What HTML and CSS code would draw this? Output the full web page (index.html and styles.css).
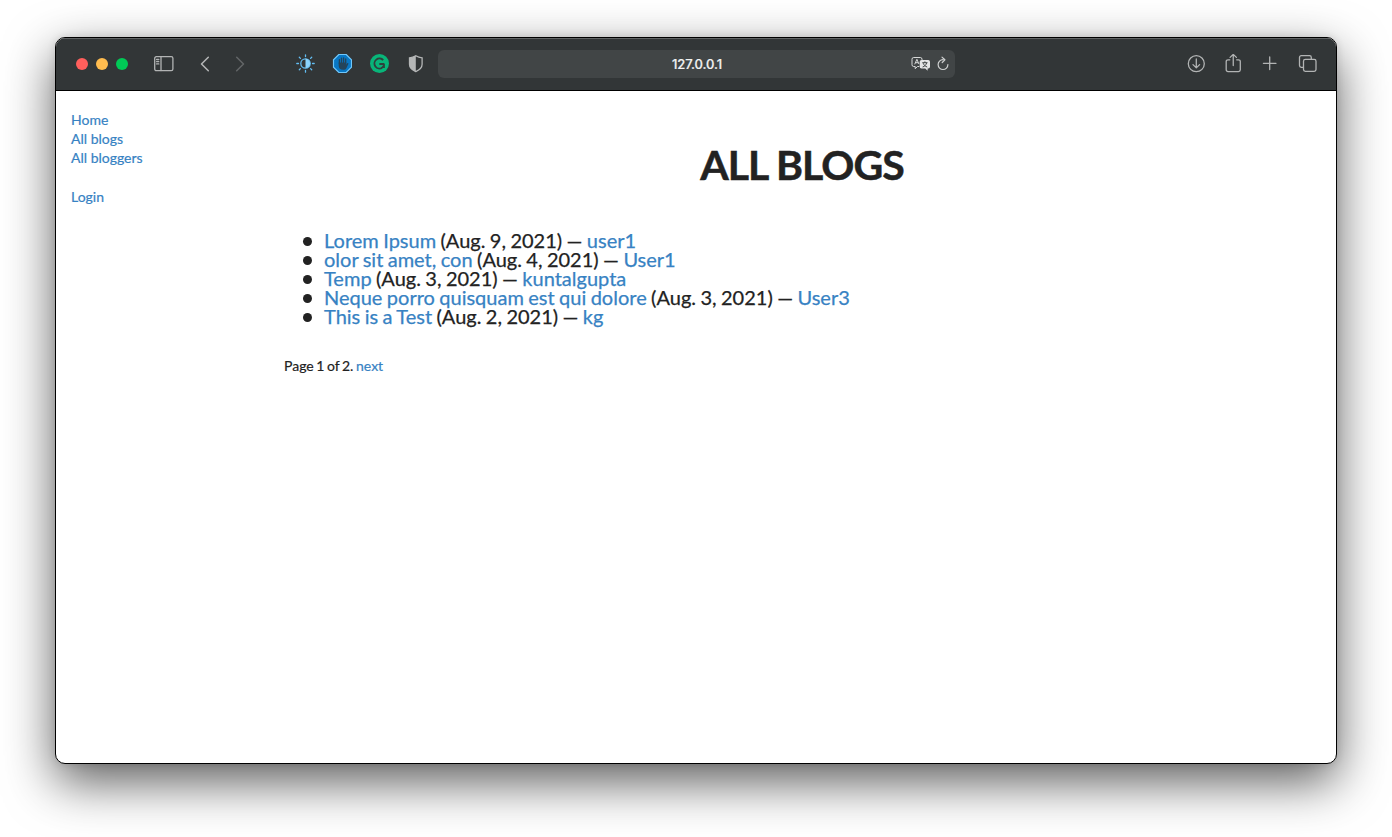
FILE: index.html
```html
<!DOCTYPE html>
<html lang="en">
<head>
<meta charset="utf-8">
<title>All blogs</title>
<link rel="stylesheet" href="styles.css">
</head>
<body>
<div class="window">
  <header class="toolbar">
    <div class="lights"><span class="light red"></span><span class="light yellow"></span><span class="light green"></span></div>
    <svg class="icon sidebar-icon" width="20" height="16" viewBox="0 0 20 16"><rect x=".7" y=".7" width="18.2" height="14" rx="1.6"/><path d="M7 1v13.5M2.6 3.5h2.2M2.6 5.7h2.2M2.6 7.9h2.2"/></svg>
    <svg class="icon back" width="10" height="16" viewBox="0 0 10 16"><path d="M8.3 1.3 1.5 8l6.8 6.7"/></svg>
    <svg class="icon forward" width="10" height="16" viewBox="0 0 10 16"><path d="M1.7 1.3 8.5 8l-6.8 6.7"/></svg>
    <div class="extensions">
      <svg width="20" height="20" viewBox="0 0 20 20"><g fill="none" stroke="#62bdf2" stroke-width="1.3" stroke-linecap="round"><circle cx="10.500" cy="9.500" r="4.700"/><path d="M10.500.8v1.700M10.500 16.500v1.700M1.800 9.500h1.700M17.500 9.500h1.700M4.300 3.300l1.100 1.100M15.600 14.600l1.100 1.100M4.300 15.700l1.100-1.100M15.600 4.400l1.100-1.100"/></g><path fill="#8bd3fc" d="M10.500 4.800a4.700 4.700 0 0 1 0 9.400z"/></svg>
      <svg width="20" height="20" viewBox="0 0 20 20"><g transform="translate(.5 -.5)"><path d="M6.300 1h7.400L19 6.300v7.400L13.700 19H6.300L1 13.700V6.300z" fill="#0877c4" stroke="#70c7fa" stroke-width="1.200"/><path fill="none" stroke="#24445a" stroke-width="1.300" stroke-linecap="round" d="M6.900 10V6.200M9 9V4.700M11.100 9V4.300M13.200 9.500V5.500"/><path fill="#24445a" d="M6.200 9h7.600v2.300l.9-1.500c.7-.8 1.500-.2 1.100.6l-1.800 4c-.6 1.300-1.500 1.900-3.300 1.900-3 0-4.500-1.500-4.500-4z"/></g></svg>
      <svg width="20" height="20" viewBox="0 0 20 20"><g transform="translate(.5 -.5)"><circle cx="10" cy="10" r="9.500" fill="#08b579"/><path d="M13.700 6.700A5 5 0 1 0 12.700 14.200M9.800 10.500h4.700" fill="none" stroke="#30403c" stroke-width="1.900"/><path d="M15.400 9.600v4.900h-4.200z" fill="#30403c"/></g></svg>
      <svg width="20" height="20" viewBox="0 0 20 20"><path d="M9.800 1.800c2 1.300 4 1.900 6.300 2v6.500c0 3.500-2.800 5.800-6.300 7.300-3.500-1.500-6.300-3.800-6.300-7.300V3.800c2.300-.1 4.300-.7 6.300-2z" fill="none" stroke="#b5b7b7" stroke-width="1.300"/><path d="M9.800 1.800v15.800c-3.500-1.500-6.300-3.800-6.300-7.300V3.800c2.300-.1 4.300-.7 6.300-2z" fill="#b5b7b7"/></svg>
    </div>
    <div class="address">
      <span class="host">127.0.0.1</span>
      <svg class="translate" width="20" height="16" viewBox="0 0 20 16"><path d="M8.200 10.500H6.500L4.200 12.700V10.500H2.700A1.700 1.700 0 0 1 1 8.800V3.200a1.700 1.700 0 0 1 1.700-1.700h6.600A1.700 1.700 0 0 1 11 3.200v.8" fill="none" stroke="#d8dada"/><path d="m3.700 8.300 2.200-5 2 4.700M4.500 6.700h2.700" fill="none" stroke="#d8dada"/><path fill="#e5e6e6" d="M10.500 4h6.700A1.800 1.800 0 0 1 19 5.800v5a1.800 1.800 0 0 1-1.800 1.800h-.6v2.200l-2.300-2.200h-3.800a1.800 1.800 0 0 1-1.800-1.800v-5A1.800 1.800 0 0 1 10.500 4z"/><path d="M11.300 6.700h5.200M13.900 5.400v1.300M15.600 7c-.6 2-2 3.400-4 4M12.200 7.200c.7 1.900 2 3.100 4 3.800" fill="none" stroke="#414546"/></svg>
      <svg class="reload" width="14" height="16" viewBox="0 0 14 16"><path d="M7 3.700a4.900 4.900 0 1 0 4.900 4.900M6 1.100l2.900 2.700L6.200 6.500"/></svg>
    </div>
    <div class="actions">
      <svg class="icon" width="20" height="20" viewBox="0 0 20 20"><circle cx="10.300" cy="9.700" r="8"/><path d="M10.300 5v8.700M7 10.600l3.300 3.300 3.300-3.300"/></svg>
      <svg class="icon" width="20" height="20" viewBox="0 0 20 20"><path d="M6.800 5.800H5A1.800 1.800 0 0 0 3.200 7.600v8.200A1.800 1.800 0 0 0 5 17.600h10.500a1.800 1.800 0 0 0 1.800-1.800V7.600a1.800 1.800 0 0 0-1.800-1.800h-1.800M10.250 11.500V.4M7.100 3.400 10.250.4l3.150 3"/></svg>
      <svg class="icon" width="20" height="20" viewBox="0 0 20 20"><path d="M9.700 3v12.600M3.400 9.300H16"/></svg>
      <svg class="icon" width="20" height="20" viewBox="0 0 20 20"><path d="M6 13.300H4.300A1.800 1.800 0 0 1 2.500 11.500V3.500a1.800 1.800 0 0 1 1.800-1.800h8.200a1.800 1.800 0 0 1 1.800 1.800v1.900"/><rect x="6.500" y="5.400" width="12.500" height="12" rx="1.800"/></svg>
    </div>
  </header>
  <div class="page">
    <nav class="side">
      <a>Home</a>
      <a>All blogs</a>
      <a>All bloggers</a>
      <a class="login">Login</a>
    </nav>
    <main class="content">
      <h1>ALL BLOGS</h1>
      <ul class="blogs">
        <li><a>Lorem Ipsum</a> (Aug. 9, 2021) — <a>user1</a></li>
        <li><a>olor sit amet, con</a> (Aug. 4, 2021) — <a>User1</a></li>
        <li><a>Temp</a> (Aug. 3, 2021) — <a>kuntalgupta</a></li>
        <li><a>Neque porro quisquam est qui dolore</a> (Aug. 3, 2021) — <a>User3</a></li>
        <li><a>This is a Test</a> (Aug. 2, 2021) — <a>kg</a></li>
      </ul>
      <p class="pagination">Page 1 of 2. <a>next</a></p>
    </main>
  </div>
</div>
</body>
</html>
```
FILE: styles.css
```css
* { box-sizing: border-box; }
body { margin: 0; padding: 37px 55px 73px; height: 837px; overflow: hidden; background: #fff; font: 14px/19px Lato, sans-serif; color: #222; }
.window { width: 1282px; height: 727px; border: 1px solid #000; border-radius: 10px; overflow: hidden; background: #fff; box-shadow: 0 18px 50px rgba(0,0,0,.64), 0 0 8px rgba(0,0,0,.12); }
.toolbar { display: flex; align-items: center; height: 53px; padding: 0 19px 0 20px; background: #323637; border-bottom: 1px solid #000; box-shadow: inset 0 1px #606364; }
.toolbar svg { display: block; flex: none; }
.lights { display: flex; gap: 8px; margin-right: 26px; }
.light { width: 12px; height: 12px; border-radius: 50%; }
.red { background: #ff5f5c; }
.yellow { background: #ffbc4f; }
.green { background: #00ca56; }
.icon { fill: none; stroke: #b2b4b4; stroke-width: 1.3; stroke-linecap: round; stroke-linejoin: round; }
.back { margin-left: 26px; stroke-width: 1.6; }
.forward { margin-left: 25px; stroke: #626566; stroke-width: 1.6; }
.extensions { display: flex; gap: 17px; margin-left: 50px; }
.address { display: flex; align-items: center; width: 517px; height: 28px; margin-left: 12px; padding: 0 5px 0 0; border-radius: 6px; background: #414546; color: #f2f2f2; font: 500 13px/28px Inter, sans-serif; }
.host { width: 50px; margin-left: 234px; margin-right: 189px; white-space: nowrap; letter-spacing: -.08px; -webkit-text-stroke: .2px; }
.reload { margin-left: 5px; fill: none; stroke: #cfd1d1; stroke-width: 1.2; stroke-linecap: round; stroke-linejoin: round; }
.actions { display: flex; gap: 17px; margin-left: auto; }
.page { display: grid; grid-template-columns: 228px 1036px; }
a { color: #3782c3; text-decoration: none; }
.side { display: flex; flex-direction: column; padding: 19px 0 0 15px; -webkit-text-stroke: .2px; }
.login { margin-top: 20px; }
h1 { margin: 49px 0 41px; font-size: 41px; line-height: 50px; font-weight: 700; letter-spacing: -1px; text-align: center; -webkit-text-stroke: .5px; }
.blogs { margin: 0; padding-left: 40px; list-style: none; font-size: 20px; line-height: 19px; word-spacing: -.7px; -webkit-text-stroke: .25px; }
.blogs li { height: 19px; }
.blogs li::before { content: ""; display: inline-block; width: 9px; height: 9px; margin: 0 12px 0 -21px; border-radius: 50%; background: #222; vertical-align: 2px; }
.pagination { margin: 30px 0 0; word-spacing: -1px; -webkit-text-stroke: .2px; }
```
